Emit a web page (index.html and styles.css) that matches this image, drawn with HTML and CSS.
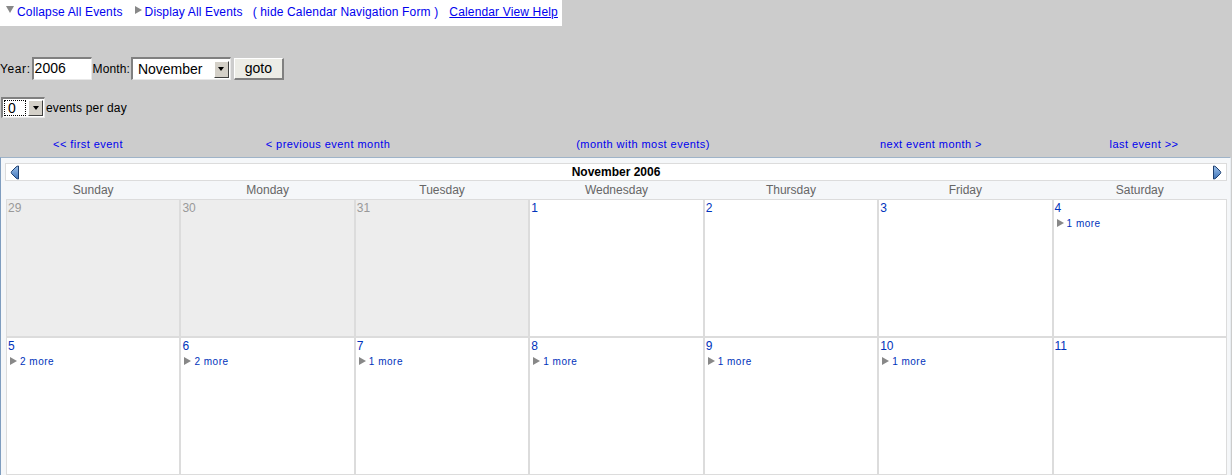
FILE: index.html
```html
<!DOCTYPE html>
<html>
<head>
<meta charset="utf-8">
<link rel="stylesheet" href="styles.css">
</head>
<body>
<div class="topbar">
  <span class="tri-down"></span><a class="lnk l1">Collapse All Events</a>
  <span class="tri-right"></span><a class="lnk l2">Display All Events</a>
  <a class="lnk l3">( hide Calendar Navigation Form )</a>
  <a class="lnk l4 u">Calendar View Help</a>
</div>

<div class="formrow">
  <span class="lbl ylbl">Year:</span>
  <span class="input">2006</span>
  <span class="lbl mlbl">Month:</span>
  <span class="select month"><span class="val">November</span><span class="arr"><span class="dtri"></span></span></span>
  <span class="btn">goto</span>
</div>

<div class="perday">
  <span class="select small"><span class="val focus">0</span><span class="arr"><span class="dtri"></span></span></span>
  <span class="lbl">events per day</span>
</div>

<div class="navrow">
  <a class="nl">&lt;&lt; first event</a>
  <a class="nl">&lt; previous event month</a>
  <a class="nl">(month with most events)</a>
  <a class="nl">next event month &gt;</a>
  <a class="nl">last event &gt;&gt;</a>
</div>

<div class="cal">
  <div class="calhead">
    <svg class="arrow" width="10" height="15" viewBox="0 0 10 15"><defs><linearGradient id="g1" x1="0" y1="0" x2="0" y2="1"><stop offset="0" stop-color="#9cc0ea"/><stop offset="1" stop-color="#3f74b8"/></linearGradient></defs><path d="M8.5 1 L8.5 14 Q7 14 6 13 L1.5 8.5 Q1 7.5 1.5 6.5 L6 2 Q7 1 8.5 1 Z" fill="url(#g1)" stroke="#1d3f70" stroke-width="1"/></svg>
    <span class="title">November 2006</span>
    <svg class="arrow" width="10" height="15" viewBox="0 0 10 15"><defs><linearGradient id="g2" x1="0" y1="0" x2="0" y2="1"><stop offset="0" stop-color="#9cc0ea"/><stop offset="1" stop-color="#3f74b8"/></linearGradient></defs><path d="M1.5 1 L1.5 14 Q3 14 4 13 L8.5 8.5 Q9 7.5 8.5 6.5 L4 2 Q3 1 1.5 1 Z" fill="url(#g2)" stroke="#1d3f70" stroke-width="1"/></svg>
  </div>
  <div class="daynames">
    <span>Sunday</span><span>Monday</span><span>Tuesday</span><span>Wednesday</span><span>Thursday</span><span>Friday</span><span>Saturday</span>
  </div>
  <div class="grid">
    <div class="cell other"><span class="num">29</span></div>
    <div class="cell other"><span class="num">30</span></div>
    <div class="cell other"><span class="num">31</span></div>
    <div class="cell"><span class="num">1</span></div>
    <div class="cell"><span class="num">2</span></div>
    <div class="cell"><span class="num">3</span></div>
    <div class="cell"><span class="num">4</span><div class="more"><span class="rtri"></span>1 more</div></div>
    <div class="cell"><span class="num">5</span><div class="more"><span class="rtri"></span>2 more</div></div>
    <div class="cell"><span class="num">6</span><div class="more"><span class="rtri"></span>2 more</div></div>
    <div class="cell"><span class="num">7</span><div class="more"><span class="rtri"></span>1 more</div></div>
    <div class="cell"><span class="num">8</span><div class="more"><span class="rtri"></span>1 more</div></div>
    <div class="cell"><span class="num">9</span><div class="more"><span class="rtri"></span>1 more</div></div>
    <div class="cell"><span class="num">10</span><div class="more"><span class="rtri"></span>1 more</div></div>
    <div class="cell"><span class="num">11</span></div>
  </div>
</div>
</body>
</html>
```

FILE: styles.css
```css
html, body {
  margin: 0;
  padding: 0;
}
body {
  background: #cccccc;
  font-family: "Liberation Sans", Arial, sans-serif;
  font-size: 12px;
  color: #000;
  overflow: hidden;
  height: 475px;
}
.topbar {
  display: flex;
  align-items: center;
  width: 562px;
  height: 26px;
  background: #fff;
  box-sizing: border-box;
  padding-bottom: 2px;
}
.lnk {
  color: #0000ee;
  font-size: 12px;
  line-height: 14px;
  letter-spacing: 0.15px;
  white-space: nowrap;
}
.u { text-decoration: underline; }
.tri-down {
  width: 0; height: 0;
  border-left: 4px solid transparent;
  border-right: 4px solid transparent;
  border-top: 7px solid #888;
  margin-left: 6px;
  margin-right: 3px;
  margin-top: -5px;
}
.tri-right {
  width: 0; height: 0;
  border-top: 4px solid transparent;
  border-bottom: 4px solid transparent;
  border-left: 7px solid #888;
  margin-left: 12px;
  margin-right: 3px;
  margin-top: -4px;
}
.l3 { margin-left: 10px; }
.l4 { margin-left: 11px; }

.formrow {
  display: flex;
  align-items: center;
  margin-top: 31px;
  height: 23px;
}
.lbl { font-size: 12px; white-space: nowrap; letter-spacing: 0.15px; }
.ylbl { letter-spacing: 0.6px; }
.mlbl { margin-left: 1px; letter-spacing: 0.1px; }
.input {
  box-sizing: border-box;
  width: 60px;
  height: 23px;
  margin-left: 1px;
  background: #fff;
  border-top: 2px solid #808080;
  border-left: 2px solid #808080;
  border-right: 1px solid #e8e8e8;
  border-bottom: 1px solid #e8e8e8;
  font-size: 14px;
  line-height: 19px;
  padding-left: 1px;
}
.select {
  box-sizing: border-box;
  display: flex;
  align-items: center;
  background: #fff;
  border-top: 2px solid #808080;
  border-left: 2px solid #808080;
  border-right: 1px solid #e8e8e8;
  border-bottom: 1px solid #e8e8e8;
}
.month {
  width: 100px;
  height: 23px;
  margin-left: 1px;
}
.val {
  flex: 1;
  font-size: 14px;
  line-height: 17px;
  padding-left: 5px;
}
.arr {
  box-sizing: border-box;
  width: 15px;
  height: 17px;
  background: #d4d0c8;
  border-top: 1px solid #fff;
  border-left: 1px solid #fff;
  border-right: 1px solid #404040;
  border-bottom: 1px solid #404040;
  display: flex;
  align-items: center;
  justify-content: center;
  margin-right: 1px;
}
.dtri {
  width: 0; height: 0;
  border-left: 3px solid transparent;
  border-right: 3px solid transparent;
  border-top: 4px solid #000;
}
.btn {
  box-sizing: border-box;
  width: 50px;
  height: 22px;
  margin-left: 3px;
  background: #ecece6;
  border-top: 1px solid #fff;
  border-left: 1px solid #fff;
  border-right: 2px solid #808080;
  border-bottom: 2px solid #808080;
  font-size: 14px;
  text-align: center;
  line-height: 19px;
}
.perday {
  display: flex;
  align-items: center;
  margin-top: 17px;
  height: 21px;
  padding-left: 1px;
}
.small {
  width: 44px;
  height: 21px;
}
.small .val {
  margin-left: 1px;
  margin-right: 2px;
  border: 1px dotted #000;
  line-height: 14px;
  padding-left: 3px;
}
.small .arr { height: 16px; }
.perday .lbl { margin-left: 1px; }

.navrow {
  display: grid;
  grid-template-columns: 176px 304px 326px 250px 176px;
  margin-top: 19px;
  height: 14px;
  line-height: 14px;
}
.nl {
  color: #0000ee;
  font-size: 11px;
  letter-spacing: 0.45px;
  text-align: center;
  white-space: nowrap;
}

.cal {
  margin-top: 6px;
  width: 1231px;
  box-sizing: border-box;
  background: #f5f7f9;
  border-top: 1px solid #9fb3c8;
  border-left: 1px solid #7f9dbf;
  border-right: 1px solid #e8ecf0;
  padding: 5px 4px 0 4px;
  height: 319px;
}
.calhead {
  box-sizing: border-box;
  height: 18px;
  background: #fff;
  border: 1px solid #dcdcdc;
  display: flex;
  align-items: center;
  justify-content: space-between;
  padding: 0 4px;
  width: 1222px;
}
.arrow { display: block; }
.title {
  font-weight: bold;
  font-size: 12px;
  color: #000;
}
.daynames {
  display: grid;
  grid-template-columns: repeat(7, 1fr);
  height: 18px;
  line-height: 18px;
  margin-left: 1px;
  width: 1221px;
}
.daynames span {
  text-align: center;
  color: #666;
  font-size: 12px;
}
.grid {
  display: grid;
  grid-template-columns: repeat(7, 1fr);
  grid-template-rows: 138px 138px;
  margin-left: 1px;
  width: 1221px;
}
.cell {
  box-sizing: border-box;
  background: #fff;
  border: 1px solid #dcdcdc;
  padding: 1px 0 0 1px;
}
.cell.other { background: #ededed; }
.num {
  display: block;
  font-size: 12px;
  line-height: 14px;
  color: #0033bb;
}
.other .num { color: #999; }
.more {
  display: flex;
  align-items: center;
  font-size: 10px;
  letter-spacing: 0.5px;
  color: #0033bb;
  line-height: 12px;
  margin-top: 3px;
}
.rtri {
  width: 0; height: 0;
  border-top: 4px solid transparent;
  border-bottom: 4px solid transparent;
  border-left: 7px solid #888;
  margin-left: 2px;
  margin-right: 3px;
  margin-top: -3px;
}
```
